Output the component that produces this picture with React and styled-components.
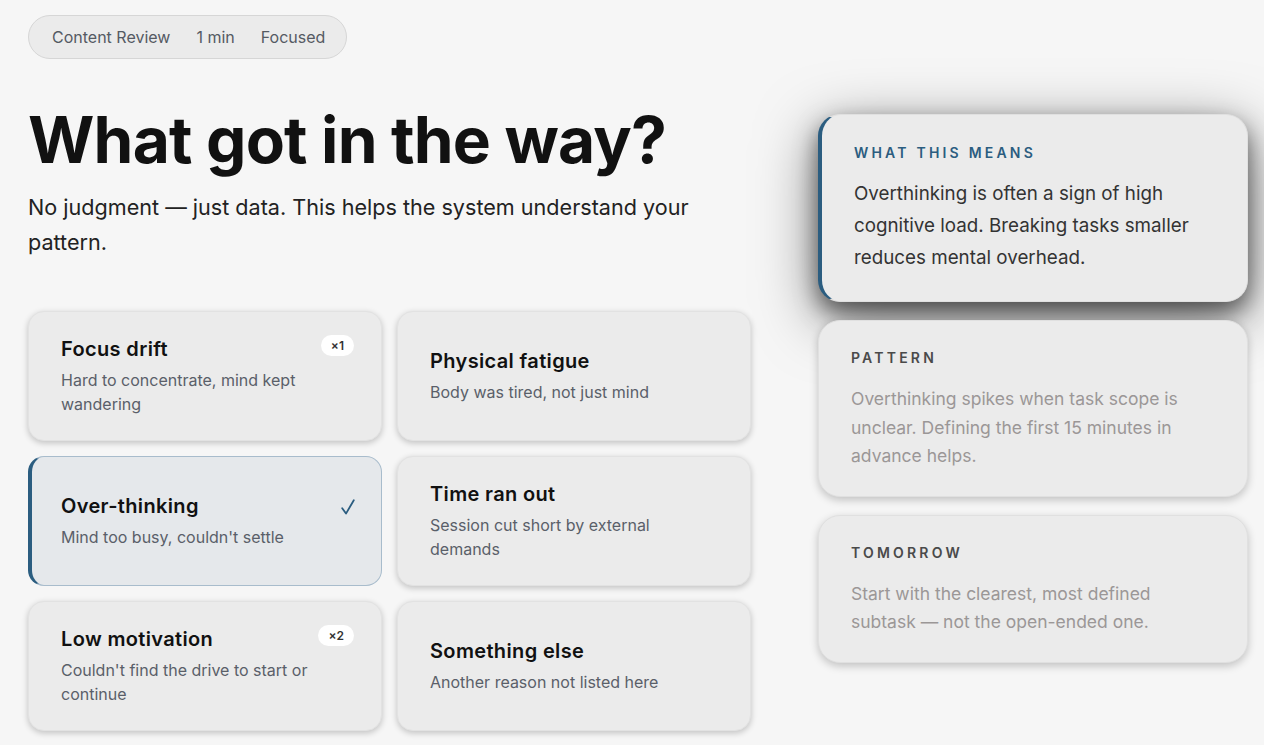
import React from "react";
import styled, { createGlobalStyle } from "styled-components";

const Global = createGlobalStyle`
  html, body { margin: 0; padding: 0; background: #f6f6f6; }
  body { font-family: Inter, "Noto Sans", sans-serif; color: #222; }
  * { box-sizing: border-box; }
`;

const Page = styled.div`
  padding: 15px 16px 0 28px;
  min-height: 745px;
`;

const MetaPill = styled.div`
  display: inline-flex;
  align-items: center;
  gap: 26px;
  height: 44px;
  padding: 0 21px 0 23px;
  border-radius: 22px;
  background: #ebebeb;
  border: 1px solid #d6d6d6;
  font-size: 16px;
  color: #555a63;
`;

const Layout = styled.div`
  display: grid;
  grid-template-columns: 723px 430px;
  column-gap: 67px;
  margin-top: 46px;
  align-items: start;
`;

const Left = styled.div`
  display: flex;
  flex-direction: column;
`;

const Heading = styled.h1`
  margin: 0;
  font-family: Inter, sans-serif;
  font-weight: 700;
  font-size: 64px;
  line-height: 70px;
  letter-spacing: -0.8px;
  color: #111;
`;

const Sub = styled.p`
  margin: 15px 0 0;
  font-size: 21.6px;
  line-height: 35px;
  color: #222;
  max-width: 700px;
`;

const Grid = styled.div`
  margin-top: 51px;
  display: grid;
  grid-template-columns: 354px 354px;
  grid-auto-rows: 130px;
  gap: 15px;
`;

const Card = styled.div`
  position: relative;
  display: flex;
  flex-direction: column;
  justify-content: center;
  padding: 0 32px;
  border-radius: 16px;
  background: ${p => (p.$selected ? "#e5e8eb" : "#ebebeb")};
  border: 1px solid ${p => (p.$selected ? "#a8bccc" : "#e2e2e2")};
  border-left: ${p => (p.$selected ? "4px solid #2b5d80" : "1px solid #e2e2e2")};
  padding-left: ${p => (p.$selected ? "29px" : "32px")};
  box-shadow: ${p => (p.$selected ? "none" : "0 2px 6px rgba(0,0,0,0.22)")};
`;

const CardTitle = styled.div`
  font-family: Inter, sans-serif;
  font-weight: 600;
  font-size: 20px;
  line-height: 26px;
  letter-spacing: 0.35px;
  color: #111;
`;

const CardDesc = styled.div`
  margin-top: 6px;
  font-size: 16px;
  line-height: 24px;
  color: #5a5f69;
  max-width: 260px;
`;

const Count = styled.span`
  position: absolute;
  top: 23px;
  right: 27px;
  padding: 0 10px;
  height: 21px;
  line-height: 21px;
  border-radius: 11px;
  background: #fff;
  font-size: 12px;
  font-weight: 600;
  color: #333;
`;

const Check = styled.svg`
  position: absolute;
  top: 42px;
  right: 26px;
  width: 14px;
  height: 16px;
`;

const Right = styled.div`
  margin-top: 9px;
  display: flex;
  flex-direction: column;
  gap: 18px;
`;

const Panel = styled.div`
  border-radius: 22px;
  background: #ebebeb;
  border: 1px solid #e0e0e0;
  ${p =>
    p.$primary
      ? `
    padding: 28px 32px 27px;
    border-left: 4px solid #2b5d80;
    box-shadow: 0 16px 60px rgba(0,0,0,0.5), 0 10px 22px rgba(0,0,0,0.5);
  `
      : `
    padding: 27px 32px 25px;
    box-shadow: 0 3px 8px rgba(0,0,0,0.22);
  `}
`;

const PanelLabel = styled.div`
  font-size: 14px;
  line-height: 20px;
  font-weight: 600;
  letter-spacing: 3.2px;
  text-transform: uppercase;
  color: ${p => (p.$primary ? "#2b5d80" : "#4a4a4a")};
`;

const PanelText = styled.div`
  margin-top: ${p => (p.$primary ? "15px" : "17px")};
  font-size: ${p => (p.$primary ? "18.8px" : "17.5px")};
  line-height: ${p => (p.$primary ? "32px" : "28.5px")};
  color: ${p => (p.$primary ? "#333" : "#9b9797")};
`;

const reasons = [
  { title: "Focus drift", desc: "Hard to concentrate, mind kept wandering", count: 1 },
  { title: "Physical fatigue", desc: "Body was tired, not just mind" },
  { title: "Over-thinking", desc: "Mind too busy, couldn't settle", selected: true },
  { title: "Time ran out", desc: "Session cut short by external demands" },
  { title: "Low motivation", desc: "Couldn't find the drive to start or continue", count: 2 },
  { title: "Something else", desc: "Another reason not listed here" },
];

const panels = [
  {
    label: "What this means",
    text: "Overthinking is often a sign of high cognitive load. Breaking tasks smaller reduces mental overhead.",
    primary: true,
  },
  {
    label: "Pattern",
    text: "Overthinking spikes when task scope is unclear. Defining the first 15 minutes in advance helps.",
  },
  {
    label: "Tomorrow",
    text: "Start with the clearest, most defined subtask — not the open-ended one.",
  },
];

export default function App() {
  return (
    <Page>
      <Global />
      <MetaPill>
        <span>Content Review</span>
        <span>1 min</span>
        <span>Focused</span>
      </MetaPill>
      <Layout>
        <Left>
          <Heading>What got in the way?</Heading>
          <Sub>No judgment — just data. This helps the system understand your pattern.</Sub>
          <Grid>
            {reasons.map(r => (
              <Card key={r.title} $selected={r.selected}>
                <CardTitle>{r.title}</CardTitle>
                <CardDesc>{r.desc}</CardDesc>
                {r.count && <Count>×{r.count}</Count>}
                {r.selected && (
                  <Check viewBox="0 0 14 16" fill="none">
                    <path
                      d="M1.2 9.2 L5 14.6 L12.8 1.2"
                      stroke="#2b5d80"
                      strokeWidth="1.8"
                      strokeLinecap="round"
                      strokeLinejoin="round"
                    />
                  </Check>
                )}
              </Card>
            ))}
          </Grid>
        </Left>
        <Right>
          {panels.map(p => (
            <Panel key={p.label} $primary={p.primary}>
              <PanelLabel $primary={p.primary}>{p.label}</PanelLabel>
              <PanelText $primary={p.primary}>{p.text}</PanelText>
            </Panel>
          ))}
        </Right>
      </Layout>
    </Page>
  );
}
